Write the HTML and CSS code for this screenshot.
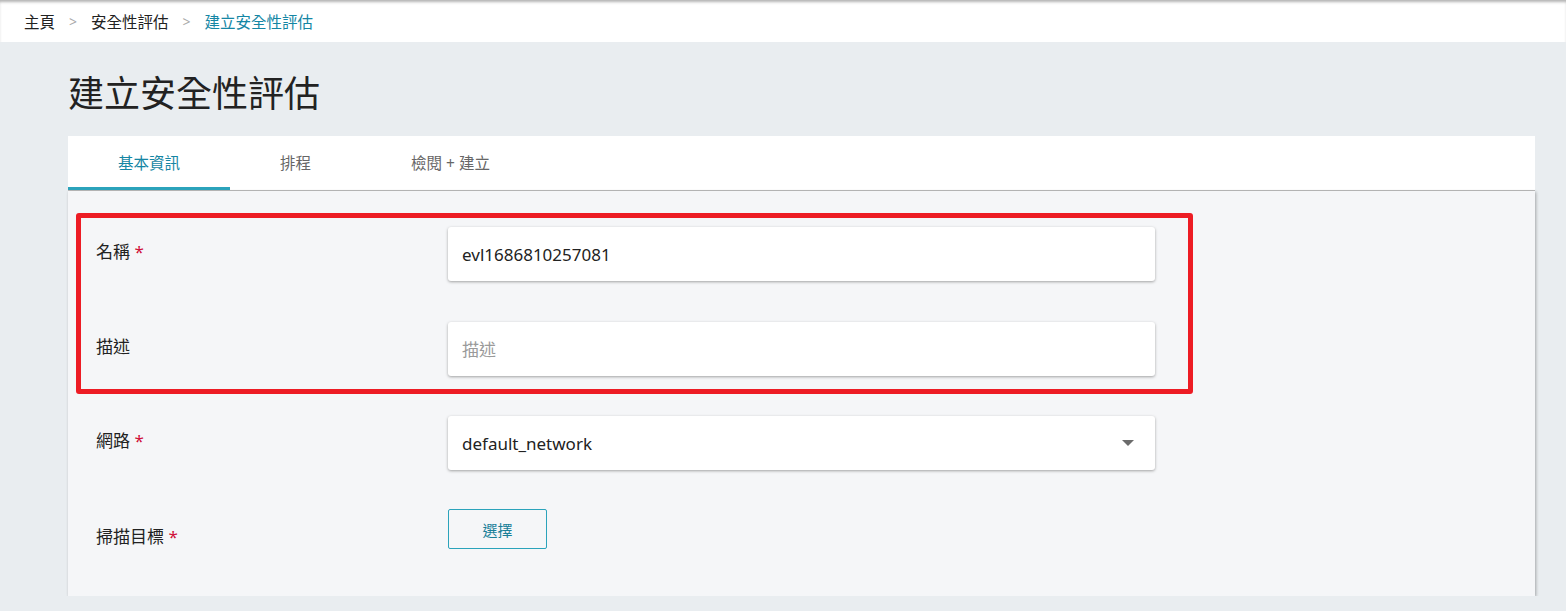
FILE: index.html
```html
<!DOCTYPE html>
<html lang="zh-Hant">
<head>
    <meta charset="UTF-8">
    <meta name="viewport" content="width=device-width, initial-scale=1.0">
    <title>建立安全性評估</title>
    <link rel="stylesheet" href="styles.css">
</head>
<body>
    <div class="breadcrumb">
        <span>主頁</span>
        <span class="sep">&gt;</span>
        <span>安全性評估</span>
        <span class="sep">&gt;</span>
        <span class="current">建立安全性評估</span>
    </div>

    <div class="main">
        <h1 class="title">建立安全性評估</h1>

        <div class="card">
            <div class="tabs">
                <div class="tab active">基本資訊</div>
                <div class="tab">排程</div>
                <div class="tab">檢閱 + 建立</div>
            </div>

            <div class="panel">
                <div class="highlight">
                    <div class="row">
                        <label class="label">名稱 <span class="req">*</span></label>
                        <input class="field" type="text" value="evl1686810257081">
                    </div>
                    <div class="row">
                        <label class="label">描述</label>
                        <input class="field" type="text" placeholder="描述">
                    </div>
                </div>

                <div class="row plain">
                    <label class="label">網路 <span class="req">*</span></label>
                    <div class="field select">
                        <span>default_network</span>
                        <svg class="caret" width="12" height="6" viewBox="0 0 12 6"><path d="M0 0h12L6 6z" fill="#6b6b6b"/></svg>
                    </div>
                </div>

                <div class="row plain last">
                    <label class="label">掃描目標 <span class="req">*</span></label>
                    <div><button class="pick">選擇</button></div>
                </div>
            </div>
        </div>
    </div>
</body>
</html>
```

FILE: styles.css
```css
body {
    margin: 0;
    font-family: "Noto Sans", "Noto Sans CJK TC", sans-serif;
    background-color: #e9edf0;
    color: #222;
}
.breadcrumb {
    display: flex;
    align-items: center;
    gap: 14px;
    height: 42px;
    padding-left: 24px;
    font-size: 15.5px;
    background-color: #fff;
    box-shadow: inset 0 3px 3px -1px rgba(0, 0, 0, 0.3);
}
.breadcrumb .sep {
    color: #aaa;
    font-size: 14px;
}
.breadcrumb .current {
    color: #1586a4;
}
.main {
    padding: 0 31px 0 68px;
}
.title {
    margin: 30px 0 20px 0;
    font-size: 36px;
    font-weight: 400;
    line-height: 44px;
}
.tabs {
    display: flex;
    background-color: #fff;
    border-bottom: 1px solid #bdbdbd;
}
.tab {
    padding: 0 50px;
    height: 51px;
    line-height: 54px;
    font-size: 15.5px;
    color: #666;
    border-bottom: 3px solid transparent;
}
.tab.active {
    color: #1586a4;
    border-bottom-color: #2ba3bb;
}
.panel {
    padding: 22px 0 47px 8px;
    background-color: #f5f6f8;
    box-shadow: 1px 1px 3px rgba(0, 0, 0, 0.3);
}
.highlight {
    box-sizing: border-box;
    width: 1117px;
    padding: 9px 0 13px 15px;
    border: 5px solid #ed1c24;
    border-radius: 3px;
}
.row {
    display: grid;
    grid-template-columns: 352px 707px;
    align-items: start;
}
.highlight .row + .row {
    margin-top: 41px;
}
.row.plain {
    padding-left: 20px;
    margin-top: 22px;
}
.row.last {
    margin-top: 39px;
}
.label {
    padding-top: 13px;
    font-size: 17px;
    line-height: 24px;
}
.row.last .label {
    padding-top: 16px;
}
.req {
    color: #d0103a;
}
.field {
    box-sizing: border-box;
    width: 707px;
    height: 54px;
    padding: 0 14px;
    border: none;
    border-radius: 3px;
    background-color: #fff;
    box-shadow: 0 1px 3px rgba(0, 0, 0, 0.35);
    font-family: inherit;
    font-size: 17px;
    color: #222;
    outline: none;
}
.field::placeholder {
    color: #9a9a9a;
}
.select {
    display: flex;
    align-items: center;
    justify-content: space-between;
    padding-right: 21px;
}
.pick {
    width: 99px;
    height: 40px;
    border: 1px solid #2ba3bb;
    border-radius: 2px;
    background: transparent;
    font-family: inherit;
    font-size: 15px;
    color: #1a7f98;
    cursor: pointer;
}
```
